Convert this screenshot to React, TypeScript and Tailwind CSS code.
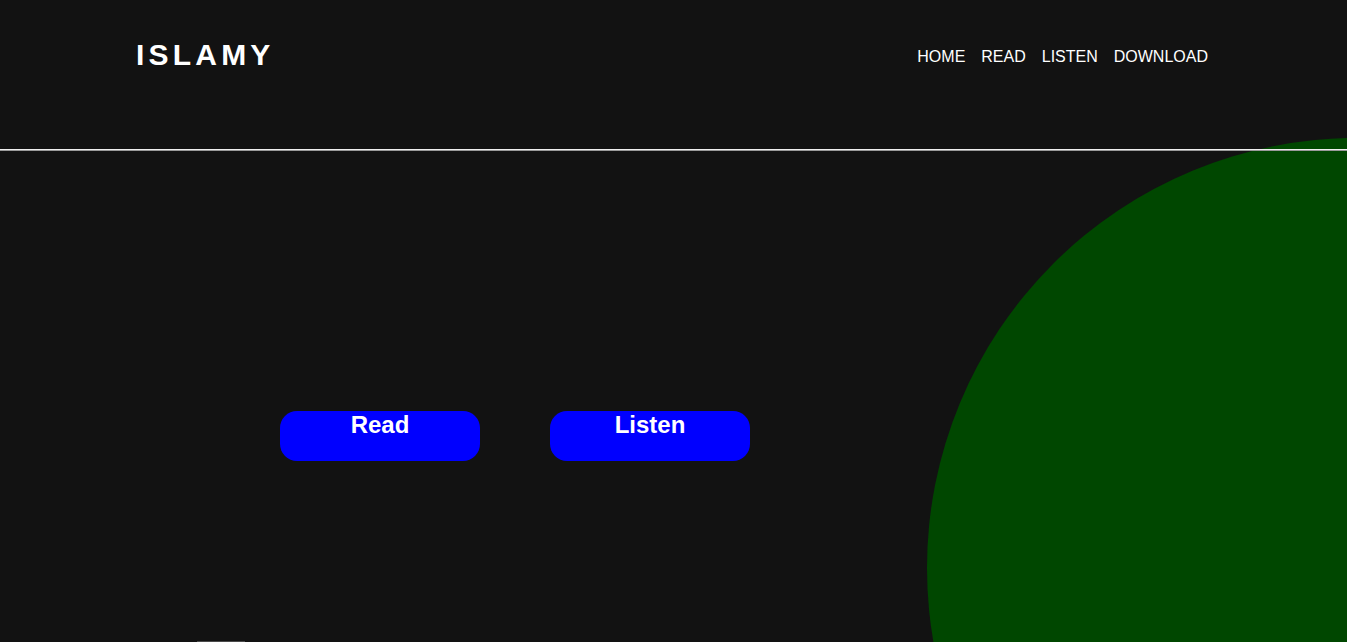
import React from "react";

export default function App() {
  const font = { fontFamily: '"Liberation Sans", Arial, sans-serif' };
  return (
    <div
      className="relative h-[642px] w-full overflow-hidden bg-[#121212] text-white flex flex-col"
      style={font}
    >
      {/* decorative circle */}
      <div className="absolute left-[927px] top-[138px] w-[860px] h-[860px] rounded-full bg-[#004700]" />

      <header className="relative z-10 flex items-center justify-between h-[112px] pl-[136px] pr-[139px]">
        <div className="text-[30px] font-bold tracking-[4.2px] leading-normal pb-[3px]">ISLAMY</div>
        <nav className="flex items-center gap-4 text-[16px] leading-normal pt-[1px]">
          <a>HOME</a>
          <a>READ</a>
          <a>LISTEN</a>
          <a>DOWNLOAD</a>
        </nav>
      </header>
      <div className="relative z-10 mt-[37px] h-px bg-[#f0f0f0]" />
      <div className="relative z-10 h-px bg-[#9a9a9a]" />

      <main className="relative z-10 flex-1 flex items-start gap-[70px] pl-[280px] pt-[260px]">
        <a className="w-[200px] h-[50px] rounded-[17px] bg-[#0000ff] text-center text-[24px] font-bold leading-[28px]">
          Read
        </a>
        <a className="w-[200px] h-[50px] rounded-[17px] bg-[#0000ff] text-center text-[24px] font-bold leading-[28px]">
          Listen
        </a>
      </main>

      <div className="relative z-10 pl-[197px]">
        <div className="w-[48px] h-px bg-[#4a4a4a]" />
      </div>
    </div>
  );
}
